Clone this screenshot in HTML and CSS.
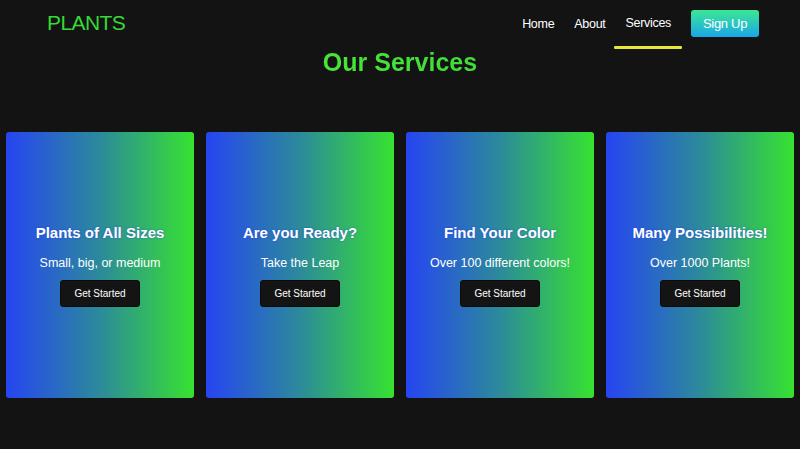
FILE: index.html
```html
<!DOCTYPE html>
<html lang="en">
<head>
<meta charset="utf-8">
<title>Plants</title>
<link rel="stylesheet" href="styles.css">
</head>
<body>
<header class="header">
  <div class="logo">PLANTS</div>
  <nav class="nav">
    <a class="nav-link" href="#">Home</a>
    <a class="nav-link" href="#">About</a>
    <a class="nav-link active" href="#">Services</a>
    <a class="signup" href="#">Sign Up</a>
  </nav>
</header>
<main>
  <h1 class="title">Our Services</h1>
  <section class="cards">
    <div class="card">
      <h2 class="card-title">Plants of All Sizes</h2>
      <p class="card-text">Small, big, or medium</p>
      <button class="card-btn">Get Started</button>
    </div>
    <div class="card">
      <h2 class="card-title">Are you Ready?</h2>
      <p class="card-text">Take the Leap</p>
      <button class="card-btn">Get Started</button>
    </div>
    <div class="card">
      <h2 class="card-title">Find Your Color</h2>
      <p class="card-text">Over 100 different colors!</p>
      <button class="card-btn">Get Started</button>
    </div>
    <div class="card">
      <h2 class="card-title">Many Possibilities!</h2>
      <p class="card-text">Over 1000 Plants!</p>
      <button class="card-btn">Get Started</button>
    </div>
  </section>
</main>
</body>
</html>
```
FILE: styles.css
```css
* { box-sizing: border-box; }
html, body { margin: 0; padding: 0; }
body {
  background: #131313;
  font-family: "Liberation Sans", Arial, sans-serif;
  color: #fff;
  width: 800px;
  height: 449px;
  overflow: hidden;
}
.header {
  display: flex;
  justify-content: space-between;
  align-items: center;
  height: 47px;
  padding: 0 41px 0 47px;
}
.logo {
  font-size: 21px;
  color: #36d936;
  letter-spacing: -0.6px;
  margin-top: -2px;
}
.nav {
  display: flex;
  align-items: center;
  height: 100%;
}
.nav-link {
  position: relative;
  color: #fff;
  text-decoration: none;
  font-size: 12.5px;
  letter-spacing: -0.3px;
  margin-right: 20px;
}
.nav-link.active { top: -1px; }
.nav-link.active::after {
  content: "";
  position: absolute;
  left: -11px;
  right: -11px;
  top: 30px;
  height: 3px;
  background: #e6e63a;
  border-radius: 1px;
}
.signup {
  display: block;
  color: #fff;
  text-decoration: none;
  font-size: 13px;
  letter-spacing: -0.3px;
  height: 27px;
  line-height: 27px;
  width: 68px;
  text-align: center;
  border-radius: 3px;
  background: linear-gradient(to bottom, #3be894, #1aa6ea);
  margin-top: -1px;
}
.title {
  margin: 0;
  text-align: center;
  font-size: 25px;
  line-height: 30px;
  font-weight: bold;
  background: linear-gradient(to right, #5ef53d, #2ccb33);
  -webkit-background-clip: text;
  background-clip: text;
  color: transparent;
}
.cards {
  display: grid;
  grid-template-columns: repeat(4, 1fr);
  gap: 12px;
  padding: 0 6px;
  margin-top: 55px;
}
.card {
  height: 266px;
  border-radius: 3px;
  background: linear-gradient(to right, #2645f2 0%, #2c8a9a 50%, #37e230 100%);
  display: flex;
  flex-direction: column;
  align-items: center;
  justify-content: center;
  text-align: center;
}
.card-title {
  margin: 0;
  font-size: 15px;
  font-weight: bold;
  color: #fff;
  text-shadow: 0 0 2px rgba(40, 60, 240, 0.8);
}
.card-text {
  margin: 15px 0 10px;
  font-size: 12.5px;
  color: #fff;
}
.card-btn {
  width: 80px;
  height: 27px;
  background: #141414;
  color: #fff;
  border: 1px solid #0a0a0a;
  border-radius: 3px;
  font-family: "Liberation Sans", Arial, sans-serif;
  font-size: 10px;
  padding: 0;
}
```
